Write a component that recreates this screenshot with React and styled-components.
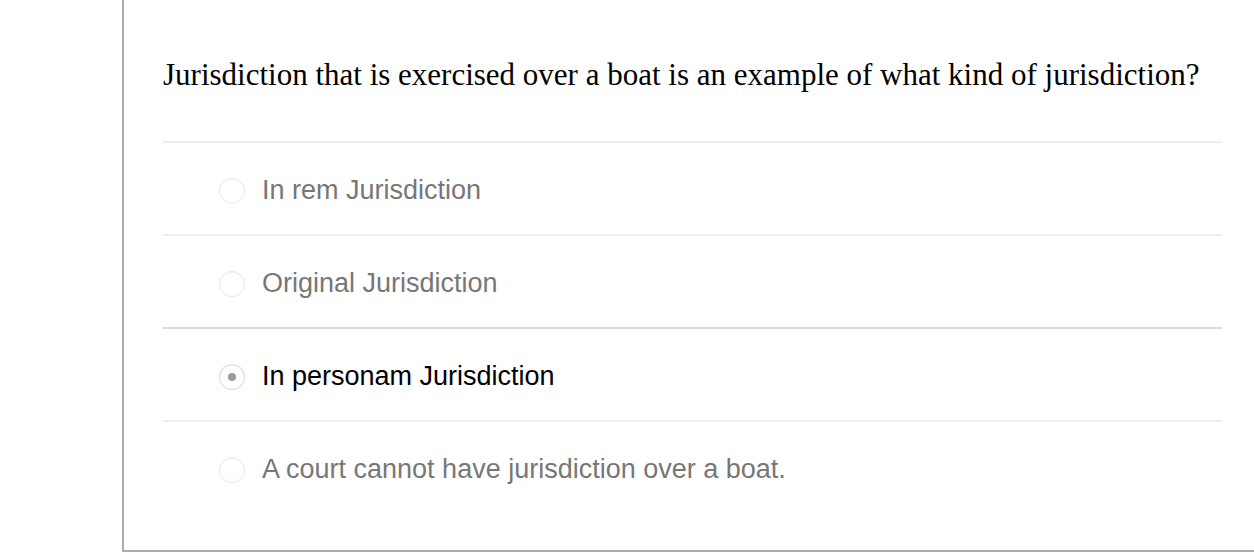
import React from "react";
import styled, { createGlobalStyle } from "styled-components";

const Global = createGlobalStyle`
  html, body { margin: 0; padding: 0; background: #fff; }
  body { overflow: hidden; }
`;

const Page = styled.div`
  width: 1254px;
  height: 556px;
  overflow: hidden;
`;

const Panel = styled.div`
  margin-left: 122px;
  width: 1200px;
  height: 552px;
  box-sizing: border-box;
  border-left: 2px solid #ababab;
  border-bottom: 2px solid #ababab;
  padding-left: 39px;
`;

const Content = styled.div`
  width: 1059px;
`;

const Question = styled.div`
  height: 141px;
  box-sizing: border-box;
  padding-top: 53px;
  font-family: "Liberation Serif", "Times New Roman", serif;
  font-size: 31px;
  line-height: 44px;
  color: #000;
  white-space: nowrap;
`;

const Option = styled.label`
  display: flex;
  align-items: center;
  gap: 17px;
  height: 93px;
  box-sizing: border-box;
  padding: 4px 0 0 56px;
  border-top: 2px solid ${(p) => (p.$strong ? "#dcdcdc" : "#eeeeee")};
  font-family: "Liberation Sans", Arial, sans-serif;
  font-size: 27px;
  color: ${(p) => (p.$selected ? "#000" : "#777")};
  cursor: pointer;
`;

const Radio = styled.span`
  width: 24px;
  height: 24px;
  flex: none;
  border-radius: 50%;
  border: 1px solid ${(p) => (p.$selected ? "#d4d4d4" : "#e8e8e8")};
  box-shadow: inset 0 1px 2px rgba(0, 0, 0, 0.04);
  display: flex;
  align-items: center;
  justify-content: center;
  background: #fff;
  &::after {
    content: "";
    width: 8px;
    height: 8px;
    border-radius: 50%;
    background: #999;
    display: ${(p) => (p.$selected ? "block" : "none")};
  }
`;

const options = [
  "In rem Jurisdiction",
  "Original Jurisdiction",
  "In personam Jurisdiction",
  "A court cannot have jurisdiction over a boat.",
];
const selected = 2;

export default function App() {
  return (
    <Page>
      <Global />
      <Panel>
        <Content>
          <Question>
            Jurisdiction that is exercised over a boat is an example of what kind of jurisdiction?
          </Question>
          {options.map((o, i) => (
            <Option key={o} $selected={i === selected} $strong={i === selected}>
              <Radio $selected={i === selected} />
              {o}
            </Option>
          ))}
        </Content>
      </Panel>
    </Page>
  );
}
